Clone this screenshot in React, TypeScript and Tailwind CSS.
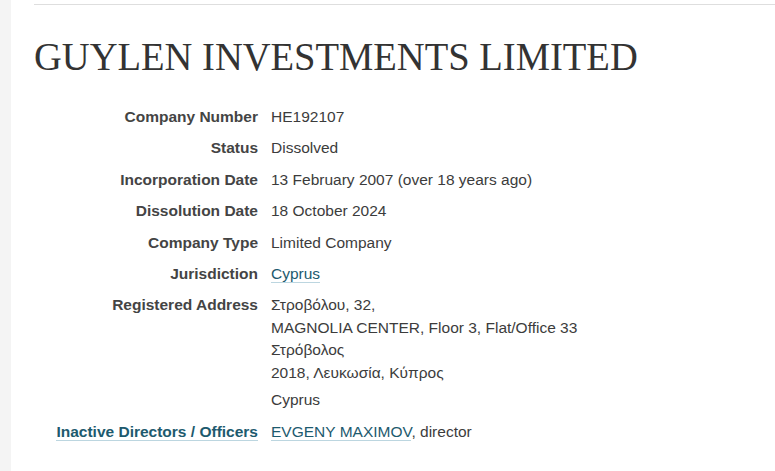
import React from 'react'

const rows: { label: string; value: React.ReactNode }[] = [
    { label: 'Company Number', value: 'HE192107' },
    { label: 'Status', value: 'Dissolved' },
    { label: 'Incorporation Date', value: '13 February 2007 (over 18 years ago)' },
    { label: 'Dissolution Date', value: '18 October 2024' },
    { label: 'Company Type', value: 'Limited Company' },
]

function Link({ children, bold }: { children: React.ReactNode; bold?: boolean }) {
    return (
        <span className={`text-[#1d5a6e] border-b border-[#bcd6e0] ${bold ? 'font-bold' : ''}`}>{children}</span>
    )
}

export default function App() {
    return (
        <div className="flex min-h-[471px] bg-white font-['Liberation_Sans',Arial,sans-serif] text-[15.5px] leading-[22.5px] text-[#3c3c3c]">
            <div className="w-[11px] shrink-0 bg-[#f4f4f4]" />
            <main className="flex-1 pl-[23px] pt-[4px]">
                <div className="border-t border-[#dedede]">
                    <h1 className="mt-[28px] origin-left scale-x-[0.94] whitespace-nowrap font-['Liberation_Serif',serif] text-[41px] leading-[46px] text-[#333]">
                        GUYLEN INVESTMENTS LIMITED
                    </h1>

                    <dl className="mt-[27px] grid grid-cols-[237px_1fr]">
                        {rows.map((r) => (
                            <React.Fragment key={r.label}>
                                <dt className="pr-[13px] text-right font-bold text-[#444] mb-[8.9px]">{r.label}</dt>
                                <dd className="mb-[8.9px]">{r.value}</dd>
                            </React.Fragment>
                        ))}

                        <dt className="pr-[13px] text-right font-bold text-[#444] mb-[8.9px]">Jurisdiction</dt>
                        <dd className="mb-[8.9px]"><Link>Cyprus</Link></dd>

                        <dt className="pr-[13px] text-right font-bold text-[#444] mb-[8.9px]">Registered Address</dt>
                        <dd className="mb-[8.9px]">
                            <div>Στροβόλου, 32,</div>
                            <div>MAGNOLIA CENTER, Floor 3, Flat/Office 33</div>
                            <div>Στρόβολος</div>
                            <div>2018, Λευκωσία, Κύπρος</div>
                            <div className="mt-[5px]">Cyprus</div>
                        </dd>

                        <dt className="pr-[13px] text-right mb-[8.9px] whitespace-nowrap">
                            <Link bold>Inactive Directors / Officers</Link>
                        </dt>
                        <dd className="mb-[8.9px]">
                            <Link>EVGENY MAXIMOV</Link>, director
                        </dd>
                    </dl>
                </div>
            </main>
        </div>
    )
}
